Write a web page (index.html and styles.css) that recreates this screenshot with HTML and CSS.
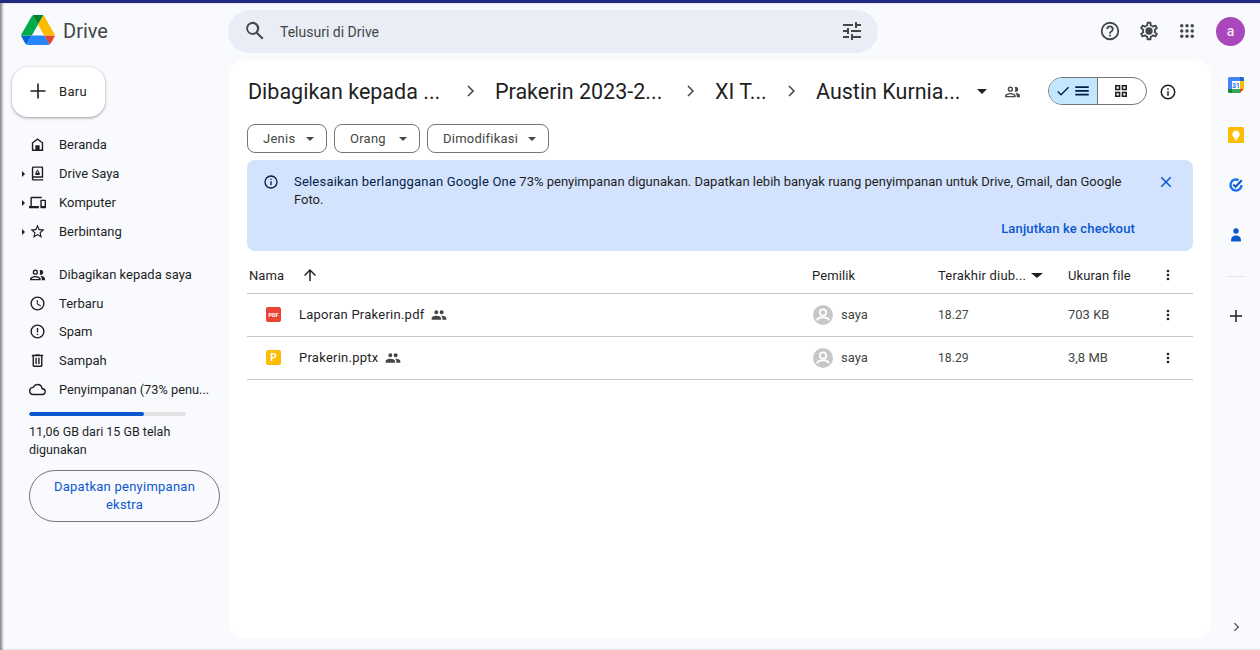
FILE: index.html
```html
<!DOCTYPE html>
<html lang="id">
<head>
<meta charset="utf-8">
<title>Drive</title>
<link rel="stylesheet" href="styles.css">
</head>
<body>
<div class="app">
  <aside class="sidebar">
    <div class="logo">
      <svg width="34" height="30" viewBox="0 0 87.3 78"><path d="M6.6 66.85l3.85 6.65c.8 1.4 1.95 2.5 3.3 3.3L27.5 53H0c0 1.55.4 3.1 1.2 4.5z" fill="#0066da"/><path d="M43.65 25L29.9 1.2c-1.35.8-2.5 1.9-3.3 3.3L1.2 48.5A9 9 0 0 0 0 53h27.5z" fill="#00ac47"/><path d="M73.55 76.8c1.35-.8 2.5-1.9 3.3-3.3l1.6-2.75 7.65-13.25c.8-1.4 1.2-2.95 1.2-4.5H59.8l5.85 11.5z" fill="#ea4335"/><path d="M43.65 25L57.4 1.2C56.05.4 54.5 0 52.9 0H34.4c-1.6 0-3.15.45-4.5 1.2z" fill="#00832d"/><path d="M59.8 53H27.5L13.75 76.8c1.35.8 2.9 1.2 4.5 1.2h50.8c1.6 0 3.15-.45 4.5-1.2z" fill="#2684fc"/><path d="M73.4 26.5L60.7 4.5c-.8-1.4-1.95-2.5-3.3-3.3L43.65 25 59.8 53h27.45c0-1.55-.4-3.1-1.2-4.5z" fill="#ffba00"/></svg>
      <span class="logo-text">Drive</span>
    </div>
    <button class="new-btn">
      <svg width="24" height="24" viewBox="0 0 24 24"><path d="M19.5 12.8h-6.700v6.700h-1.600v-6.700H4.500v-1.600h6.700V4.500h1.600v6.700h6.700z" fill="#1f1f1f"/></svg>
      <span>Baru</span>
    </button>
    <nav class="nav">
      <div class="nav-group">
        <a class="nav-item"><i class="caret-slot"></i><svg class="nav-ic" viewBox="0 0 24 24"><path d="M12 3L4 9v12h16V9zm6 16h-3v-6H9v6H6v-9l6-4.5 6 4.5z" fill="#1f1f1f"/></svg><span>Beranda</span></a>
        <a class="nav-item"><i class="caret-slot caret"></i><svg class="nav-ic" viewBox="0 0 24 24"><path d="M19 2H6a2 2 0 0 0-2 2v16a2 2 0 0 0 2 2h14v-2H6v-2h14V4a2 2 0 0 0-1-2zm-1 14H6V4h12z" fill="#1f1f1f"/><path d="M12 6l-3 5v3h6v-3zm0 2.6l1.4 2.4h-2.800z" fill="#1f1f1f"/></svg><span>Drive Saya</span></a>
        <a class="nav-item"><i class="caret-slot caret"></i><svg class="nav-ic wide" viewBox="0 0 24 24"><path d="M4 6h14V4H4a2 2 0 0 0-2 2v11H0v3h14v-3H4zm19 2h-6a1 1 0 0 0-1 1v10a1 1 0 0 0 1 1h6a1 1 0 0 0 1-1V9a1 1 0 0 0-1-1zm-1 9h-4v-7h4z" fill="#1f1f1f"/></svg><span>Komputer</span></a>
        <a class="nav-item"><i class="caret-slot caret"></i><svg class="nav-ic" viewBox="0 0 24 24"><path d="M22 9.24l-7.19-.62L12 2 9.19 8.63 2 9.24l5.46 4.73L5.82 21 12 17.27 18.18 21l-1.63-7.03zM12 15.4l-3.76 2.27 1-4.28-3.32-2.88 4.38-.38L12 6.1l1.71 4.04 4.38.38-3.32 2.88 1 4.28z" fill="#1f1f1f"/></svg><span>Berbintang</span></a>
      </div>
      <div class="nav-group">
        <a class="nav-item"><i class="caret-slot"></i><svg class="nav-ic" viewBox="0 0 24 24"><path d="M16.500 12.500a3.500 3.500 0 1 0-1.600-6.600 5.500 5.500 0 0 1 0 6.200c.5.3 1 .4 1.600.4zM9 12.500A3.750 3.750 0 1 0 9 5a3.750 3.750 0 0 0 0 7.500zm0-5.600a1.850 1.850 0 1 1 0 3.700 1.850 1.850 0 0 1 0-3.700zM9 14c-2.900 0-7.500 1.400-7.500 4v2h15v-2c0-2.600-4.600-4-7.500-4zm-5.500 4.200c.3-.8 3.100-2.300 5.500-2.300s5.200 1.500 5.500 2.300zM17.500 14c-.5 0-1 0-1.600.1 1.300.9 2.100 2.200 2.100 3.900v2h4.500v-2c0-2.600-2.700-4-5-4z" fill="#1f1f1f"/></svg><span>Dibagikan kepada saya</span></a>
        <a class="nav-item"><i class="caret-slot"></i><svg class="nav-ic" viewBox="0 0 24 24"><path d="M12 2a10 10 0 1 0 0 20 10 10 0 0 0 0-20zm0 18a8 8 0 1 1 0-16 8 8 0 0 1 0 16zm.5-13H11v6l5.200 3.200.8-1.300-4.500-2.700z" fill="#1f1f1f"/></svg><span>Terbaru</span></a>
        <a class="nav-item"><i class="caret-slot"></i><svg class="nav-ic" viewBox="0 0 24 24"><path d="M11 15h2v2h-2zm0-8h2v6h-2zm1-5a10 10 0 1 0 0 20 10 10 0 0 0 0-20zm0 18a8 8 0 1 1 0-16 8 8 0 0 1 0 16z" fill="#1f1f1f"/></svg><span>Spam</span></a>
        <a class="nav-item"><i class="caret-slot"></i><svg class="nav-ic" viewBox="0 0 24 24"><path d="M15 4V3H9v1H4v2h1v13a2 2 0 0 0 2 2h10a2 2 0 0 0 2-2V6h1V4zm2 15H7V6h10zM9 8h2v9H9zm4 0h2v9h-2z" fill="#1f1f1f"/></svg><span>Sampah</span></a>
        <a class="nav-item"><i class="caret-slot"></i><svg class="nav-ic" viewBox="0 0 24 24"><path d="M19.350 10.040A7.490 7.490 0 0 0 12 4a7.500 7.500 0 0 0-6.650 4.040A6 6 0 0 0 6 20h13a5 5 0 0 0 .350-9.960zM19 18H6a4 4 0 0 1-.4-7.980l1.070-.11.500-.95A5.460 5.460 0 0 1 12 6a5.500 5.500 0 0 1 5.390 4.420l.3 1.500 1.530.11A3 3 0 0 1 19 18z" fill="#1f1f1f"/></svg><span class="storage-label">Penyimpanan (73% penu...</span></a>
      </div>
    </nav>
    <div class="storage">
      <div class="bar"><div class="bar-fill" style="width:73%"></div></div>
      <p class="storage-text">11,06 GB dari 15 GB telah digunakan</p>
      <button class="storage-btn">Dapatkan penyimpanan ekstra</button>
    </div>
  </aside>

  <div class="center">
    <header class="topbar">
      <div class="search">
        <svg width="24" height="24" viewBox="0 0 24 24"><path d="M20.490 19l-5.730-5.730A6.470 6.470 0 0 0 16.250 9.500a6.500 6.500 0 1 0-2.980 5.260L19 20.490zM5 9.500a4.500 4.500 0 1 1 9 0 4.500 4.500 0 0 1-9 0z" fill="#444746"/></svg>
        <span class="search-text">Telusuri di Drive</span>
        <svg class="tune" width="24" height="24" viewBox="0 0 24 24"><path d="M3 17v2h6v-2zM3 5v2h10V5zm10 16v-2h8v-2h-8v-2h-2v6zM7 9v2H3v2h4v2h2V9zm14 4v-2H11v2zm-6-4h2V7h4V5h-4V3h-2z" fill="#444746"/></svg>
      </div>
      <div class="top-actions">
        <svg class="top-ic" viewBox="0 0 24 24"><path d="M11 18h2v-2h-2zm1-16a10 10 0 1 0 0 20 10 10 0 0 0 0-20zm0 18a8 8 0 1 1 0-16 8 8 0 0 1 0 16zm0-14a4 4 0 0 0-4 4h2a2 2 0 1 1 4 0c0 2-3 1.750-3 5h2c0-2.250 3-2.500 3-5a4 4 0 0 0-4-4z" fill="#444746"/></svg>
        <svg class="top-ic" viewBox="0 0 24 24"><path d="M19.430 12.980a7.800 7.800 0 0 0 0-1.960l2.110-1.650a.5.500 0 0 0 .12-.64l-2-3.460a.5.500 0 0 0-.61-.22l-2.490 1a7.300 7.300 0 0 0-1.690-.98l-.38-2.650A.49.490 0 0 0 14 2h-4a.49.490 0 0 0-.49.420l-.38 2.650c-.61.250-1.170.590-1.690.98l-2.490-1a.5.500 0 0 0-.61.220l-2 3.460a.49.490 0 0 0 .12.640l2.110 1.650a7.900 7.900 0 0 0 0 1.960l-2.110 1.650a.5.500 0 0 0-.12.640l2 3.460c.12.220.39.300.61.220l2.490-1c.52.400 1.080.730 1.690.98l.38 2.650c.03.240.24.420.49.420h4c.25 0 .46-.18.49-.42l.38-2.650c.61-.25 1.170-.59 1.690-.98l2.490 1c.23.090.49 0 .61-.22l2-3.460a.5.500 0 0 0-.12-.64zm-1.980-1.710c.04.310.05.520.05.730s-.02.430-.05.730l-.14 1.130.89.700 1.080.84-.7 1.210-1.270-.51-1.040-.42-.9.680c-.43.320-.84.560-1.250.73l-1.060.43-.16 1.130-.2 1.350h-1.400l-.19-1.350-.16-1.130-1.060-.43a5.700 5.700 0 0 1-1.230-.71l-.91-.7-1.060.43-1.270.51-.7-1.210 1.080-.84.890-.7-.14-1.130A8 8 0 0 1 6.500 12c0-.2.020-.43.05-.73l.14-1.130-.89-.7-1.080-.84.7-1.210 1.270.51 1.040.42.900-.68c.43-.32.840-.56 1.250-.73l1.060-.43.160-1.130.2-1.350h1.390l.19 1.350.16 1.130 1.060.43c.43.180.83.410 1.230.71l.91.700 1.060-.43 1.270-.51.700 1.210-1.070.85-.89.700zM12 8a4 4 0 1 0 0 8 4 4 0 0 0 0-8z" fill="#444746"/></svg>
        <svg class="top-ic" viewBox="0 0 24 24"><g fill="#444746"><circle cx="5" cy="5" r="2.300"/><circle cx="12" cy="5" r="2.300"/><circle cx="19" cy="5" r="2.300"/><circle cx="5" cy="12" r="2.300"/><circle cx="12" cy="12" r="2.300"/><circle cx="19" cy="12" r="2.300"/><circle cx="5" cy="19" r="2.300"/><circle cx="12" cy="19" r="2.300"/><circle cx="19" cy="19" r="2.300"/></g></svg>
        <div class="avatar">a</div>
      </div>
    </header>

    <main class="card">
      <div class="crumbs">
        <span class="crumb c1">Dibagikan kepada ...</span>
        <svg class="chev chev1" viewBox="0 0 24 24"><path d="M8.600 6l1.400-1.400L17.400 12 10 19.400 8.600 18l6-6z" fill="#444746"/></svg>
        <span class="crumb c2">Prakerin 2023-2...</span>
        <svg class="chev chev2" viewBox="0 0 24 24"><path d="M8.600 6l1.400-1.400L17.400 12 10 19.400 8.600 18l6-6z" fill="#444746"/></svg>
        <span class="crumb c3">XI T...</span>
        <svg class="chev chev3" viewBox="0 0 24 24"><path d="M8.600 6l1.400-1.400L17.400 12 10 19.400 8.600 18l6-6z" fill="#444746"/></svg>
        <span class="crumb c4">Austin Kurnia...</span>
        <i class="tri big"></i>
        <svg class="people-ic" viewBox="0 0 24 24"><path d="M16.500 12.500a3.500 3.500 0 1 0-1.600-6.600 5.500 5.500 0 0 1 0 6.200c.5.300 1 .4 1.600.4zM9 12.500A3.750 3.750 0 1 0 9 5a3.750 3.750 0 0 0 0 7.500zm0-5.600a1.850 1.850 0 1 1 0 3.700 1.850 1.850 0 0 1 0-3.700zM9 14c-2.900 0-7.500 1.400-7.500 4v2h15v-2c0-2.600-4.600-4-7.500-4zm-5.500 4.200c.3-.8 3.100-2.300 5.500-2.300s5.200 1.500 5.500 2.300zM17.500 14c-.5 0-1 0-1.600.1 1.300.9 2.100 2.200 2.100 3.900v2h4.500v-2c0-2.600-2.700-4-5-4z" fill="#444746"/></svg>
        <div class="toggle">
          <div class="tg tg-on">
            <svg width="16" height="16" viewBox="0 0 24 24"><path d="M9 16.200L4.800 12l-1.400 1.400L9 19 21 7l-1.400-1.400z" fill="#041e49"/></svg>
            <svg width="18" height="18" viewBox="0 0 24 24"><path d="M3 18h18v-2.200H3zm0-5h18v-2.200H3zm0-7.200V8h18V5.800z" fill="#041e49"/></svg>
          </div>
          <div class="tg tg-off">
            <svg width="16" height="16" viewBox="0 0 24 24"><path d="M3 3h8v8H3zm2.400 2.400v3.200h3.200V5.400zM13 3h8v8h-8zm2.400 2.400v3.200h3.200V5.400zM3 13h8v8H3zm2.400 2.400v3.200h3.200v-3.200zM13 13h8v8h-8zm2.400 2.400v3.200h3.200v-3.200z" fill="#1f1f1f"/></svg>
          </div>
        </div>
        <svg class="info-ic" viewBox="0 0 24 24"><path d="M11 7h2v2h-2zm0 4h2v6h-2zm1-9a10 10 0 1 0 0 20 10 10 0 0 0 0-20zm0 18a8 8 0 1 1 0-16 8 8 0 0 1 0 16z" fill="#1f1f1f"/></svg>
      </div>

      <div class="filters">
        <button class="chip chip-type">Jenis<i class="tri"></i></button>
        <button class="chip chip-people">Orang<i class="tri"></i></button>
        <button class="chip chip-date">Dimodifikasi<i class="tri"></i></button>
      </div>

      <section class="banner">
        <div class="banner-top">
          <svg class="banner-ic" viewBox="0 0 24 24"><path d="M11 7h2v2h-2zm0 4h2v6h-2zm1-9a10 10 0 1 0 0 20 10 10 0 0 0 0-20zm0 18a8 8 0 1 1 0-16 8 8 0 0 1 0 16z" fill="#041e49"/></svg>
          <div class="banner-text">
            <p class="banner-line"><span class="strong">Selesaikan berlangganan Google One</span> <span>73% penyimpanan digunakan. Dapatkan lebih banyak ruang penyimpanan untuk Drive, Gmail, dan Google</span></p>
            <p class="banner-line">Foto.</p>
          </div>
          <svg class="banner-x" viewBox="0 0 24 24"><path d="M19 6.400L17.600 5 12 10.600 6.400 5 5 6.400l5.600 5.600L5 17.600 6.400 19l5.600-5.600 5.600 5.600 1.400-1.400-5.600-5.600z" fill="#0b57d0"/></svg>
        </div>
        <div class="banner-action">Lanjutkan ke checkout</div>
      </section>

      <div class="row head">
        <div class="col-name"><span class="head-name">Nama</span><svg class="sort" viewBox="0 0 24 24"><path d="M4 12l1.400 1.400L11 7.800V20h2V7.800l5.600 5.600L20 12l-8-8z" fill="#1f1f1f"/></svg></div>
        <div class="col-owner">Pemilik</div>
        <div class="col-date head-date">Terakhir diub...<i class="tri big2"></i></div>
        <div class="col-size">Ukuran file</div>
        <div class="col-more"><svg class="more" viewBox="0 0 24 24"><path d="M12 8a2 2 0 1 0 0-4 2 2 0 0 0 0 4zm0 2a2 2 0 1 0 0 4 2 2 0 0 0 0-4zm0 6a2 2 0 1 0 0 4 2 2 0 0 0 0-4z" fill="#1f1f1f"/></svg></div>
      </div>

      <div class="row file">
        <div class="col-name file-name">
          <span class="ft ft-pdf">PDF</span>
          <span class="fname">Laporan Prakerin.pdf</span>
          <svg class="shared" viewBox="0 0 24 24"><path d="M16 11a3 3 0 1 0 0-6 3 3 0 0 0 0 6zm-8 0a3 3 0 1 0 0-6 3 3 0 0 0 0 6zm0 2c-2.330 0-7 1.170-7 3.500V19h14v-2.500C15 14.170 10.330 13 8 13zm8 0c-.29 0-.62.020-.97.050 1.160.840 1.970 1.970 1.970 3.450V19h6v-2.500c0-2.330-4.670-3.500-7-3.500z" fill="#444746"/></svg>
        </div>
        <div class="col-owner owner">
          <svg class="user" viewBox="0 0 24 24"><circle cx="12" cy="12" r="12" fill="#c7c7c7"/><circle cx="12" cy="9" r="3.800" fill="none" stroke="#fff" stroke-width="2"/><path d="M4.800 18.500c1-2.700 4.500-3.700 7.200-3.700s6.200 1 7.200 3.700" fill="none" stroke="#fff" stroke-width="2.400"/></svg>
          <span>saya</span>
        </div>
        <div class="col-date">18.27</div>
        <div class="col-size">703 KB</div>
        <div class="col-more"><svg class="more" viewBox="0 0 24 24"><path d="M12 8a2 2 0 1 0 0-4 2 2 0 0 0 0 4zm0 2a2 2 0 1 0 0 4 2 2 0 0 0 0-4zm0 6a2 2 0 1 0 0 4 2 2 0 0 0 0-4z" fill="#1f1f1f"/></svg></div>
      </div>

      <div class="row file">
        <div class="col-name file-name">
          <span class="ft ft-ppt">P</span>
          <span class="fname">Prakerin.pptx</span>
          <svg class="shared" viewBox="0 0 24 24"><path d="M16 11a3 3 0 1 0 0-6 3 3 0 0 0 0 6zm-8 0a3 3 0 1 0 0-6 3 3 0 0 0 0 6zm0 2c-2.330 0-7 1.170-7 3.500V19h14v-2.500C15 14.170 10.330 13 8 13zm8 0c-.29 0-.62.020-.97.050 1.160.840 1.970 1.970 1.970 3.450V19h6v-2.500c0-2.330-4.670-3.500-7-3.500z" fill="#444746"/></svg>
        </div>
        <div class="col-owner owner">
          <svg class="user" viewBox="0 0 24 24"><circle cx="12" cy="12" r="12" fill="#c7c7c7"/><circle cx="12" cy="9" r="3.800" fill="none" stroke="#fff" stroke-width="2"/><path d="M4.800 18.500c1-2.700 4.500-3.700 7.200-3.700s6.200 1 7.200 3.700" fill="none" stroke="#fff" stroke-width="2.400"/></svg>
          <span>saya</span>
        </div>
        <div class="col-date">18.29</div>
        <div class="col-size">3,8 MB</div>
        <div class="col-more"><svg class="more" viewBox="0 0 24 24"><path d="M12 8a2 2 0 1 0 0-4 2 2 0 0 0 0 4zm0 2a2 2 0 1 0 0 4 2 2 0 0 0 0-4zm0 6a2 2 0 1 0 0 4 2 2 0 0 0 0-4z" fill="#1f1f1f"/></svg></div>
      </div>
    </main>
  </div>

  <aside class="rail">
    <div class="rail-apps">
      <svg class="app-ic" viewBox="0 0 18 18"><rect x="1" y="1" width="16" height="16" rx="1.500" fill="#fff"/><path d="M1 13h4v4H2.500A1.500 1.500 0 0 1 1 15.500z" fill="#188038"/><path d="M5 13h8v4H5z" fill="#34a853"/><path d="M13 5h4v8h-4z" fill="#fbbc04"/><path d="M13 13h4l-4 4z" fill="#ea4335"/><path d="M1 5V2.500A1.500 1.500 0 0 1 2.500 1H13v4H5v8H1z" fill="#4285f4"/><path d="M13 1h2.500A1.500 1.500 0 0 1 17 2.500V5h-4z" fill="#1967d2"/><text x="9" y="11.500" class="cal-num">31</text></svg>
      <svg class="app-ic" viewBox="0 0 18 18"><rect x="1" y="1" width="16" height="16" rx="1.500" fill="#fbbc04"/><path d="M9 4.500a3.700 3.700 0 0 0-2 6.800V12.500h4v-1.200a3.700 3.700 0 0 0-2-6.800zM7.500 13.300h3v1h-3z" fill="#fff"/></svg>
      <svg class="app-ic" viewBox="0 0 18 18"><path d="M14.500 9a5.500 5.500 0 1 1-3-4.900" fill="none" stroke="#1a73e8" stroke-width="2.400"/><path d="M6.300 8.500l2.300 2.300 6.200-6.600" fill="none" stroke="#0b57d0" stroke-width="2"/></svg>
      <svg class="app-ic" viewBox="0 0 18 18"><circle cx="9" cy="5" r="2.700" fill="#0b57d0"/><path d="M4 14.500c0-3.400 2-5 5-5s5 1.600 5 5c0 .6-.4 1-1 1H5c-.6 0-1-.4-1-1z" fill="#0b57d0"/></svg>
    </div>
    <div class="rail-sep"></div>
    <svg class="rail-plus" viewBox="0 0 24 24"><path d="M20 13h-7v7h-2v-7H4v-2h7V4h2v7h7z" fill="#1f1f1f"/></svg>
    <svg class="rail-chev" viewBox="0 0 24 24"><path d="M8.600 6l1.400-1.400L17.400 12 10 19.400 8.600 18l6-6z" fill="#444746"/></svg>
  </aside>
</div>
</body>
</html>
```

FILE: styles.css
```css
* { box-sizing: border-box; }
html, body { margin: 0; height: 100%; overflow: hidden; }
body {
  font-family: Roboto, "Noto Sans", sans-serif;
  font-size: 13px;
  color: #1f1f1f;
  background: #f8fafd;
}
.app {
  height: 650px;
  display: grid;
  grid-template-columns: 229px 982px 49px;
  border-top: 3px solid #1f2a80;
  box-shadow: inset 3px 0 3px -1px rgba(50,50,50,.6);
}
.sidebar { padding-left: 12px; min-width: 0; }
.logo { display: flex; align-items: center; height: 57px; padding: 0 0 3px 9px; gap: 8px; }
.logo-text { font-size: 20px; color: #444746; padding-top: 1px; }
.new-btn {
  display: flex; align-items: center; width: 93px; height: 50px; margin-top: 7px;
  padding: 0 0 2px 14px; gap: 9px; border: 0; border-radius: 16px; background: #fff;
  font: 400 13px Roboto, sans-serif; letter-spacing: .3px; color: #1f1f1f;
  box-shadow: 0 1px 2px rgba(60,64,67,.3), 0 1px 3px 1px rgba(60,64,67,.15);
}
.nav { margin-top: 13px; }
.nav-group { margin-bottom: 14px; }
.nav-item { display: flex; align-items: center; height: 29px; color: #1f1f1f; }
.nav-group + .nav-group .nav-item { height: 28.750px; }
.caret-slot { width: 7px; flex: none; margin-left: 9px; margin-right: 2px; }
.caret::before {
  content: ""; display: block; width: 0; height: 0;
  border-left: 3px solid #1f1f1f; border-top: 3px solid transparent; border-bottom: 3px solid transparent;
  margin-left: 1px;
}
.nav-ic { width: 17px; height: 17px; flex: none; margin-right: 13px; margin-left: -1px; }
.nav-ic.wide { width: 19px; margin-left: -2px; margin-right: 12px; }
.storage-label { font-size: 12.800px; }
.storage { padding-left: 17px; margin-top: -6px; }
.bar { width: 157px; height: 4px; margin-top: 12px; background: #e3e3e3; border-radius: 2px; overflow: hidden; }
.bar-fill { height: 100%; background: #0b57d0; border-radius: 2px; }
.storage-text { margin: 7px 0 0; width: 175px; font-size: 12.500px; line-height: 18px; color: #1f1f1f; }
.storage-btn {
  display: block; width: 191px; height: 52px; margin-top: 11px; padding: 0 20px;
  border: 1px solid #747775; border-radius: 26px; background: transparent;
  font: 400 13px/18px Roboto, sans-serif; color: #0b57d0; letter-spacing: .25px;
}
.center { min-width: 0; display: flex; flex-direction: column; }
.topbar { display: flex; align-items: center; height: 57px; padding-bottom: 1px; }
.search {
  display: flex; align-items: center; width: 650px; height: 43px; margin-left: -1px;
  padding: 0 14px 0 15px; border-radius: 22px; background: #e9eef6;
}
.search-text { margin-left: 13px; flex: 1; font-size: 14px; color: #444746; padding-top: 2px; }
.top-actions { display: flex; align-items: center; margin-left: auto; margin-right: -34px; gap: 17px; position: relative; z-index: 1; }
.top-ic { width: 22px; height: 22px; }
.top-ic:nth-child(3) { width: 18px; height: 18px; margin: 0 2px 0 1px; }
.avatar {
  width: 29px; height: 29px; margin-left: 1px; border-radius: 50%; background: #ab47bc; color: #f6e6f8;
  display: flex; align-items: center; justify-content: center; font: 500 14px Roboto, sans-serif;
}
.card { height: 578px; background: #fff; border-radius: 16px; padding: 0 18px; }
.crumbs { display: flex; align-items: center; height: 63px; padding-bottom: 1px; }
.crumb { font-size: 21.500px; color: #1f1f1f; white-space: nowrap; }
.c1 { width: 195px; margin-left: 1px; }
.c2 { width: 170px; }
.c3 { width: 53px; }
.c4 { width: 152px; }
.chev { width: 18px; height: 18px; flex: none; }
.chev1 { margin: 0 16px 0 18px; }
.chev2 { margin: 0 16px; }
.chev3 { margin: 0 16px 0 14px; }
.tri { display: inline-block; width: 0; height: 0; border-left: 4px solid transparent; border-right: 4px solid transparent; border-top: 4px solid #444746; }
.tri.big { margin-left: 9px; border-top-color: #1f1f1f; border-left-width: 5px; border-right-width: 5px; border-top-width: 5px; }
.people-ic { width: 17px; height: 17px; margin-left: 17px; flex: none; }
.toggle { display: flex; width: 99px; height: 28px; margin-left: 27px; border: 1px solid #747775; border-radius: 14px; overflow: hidden; flex: none; }
.tg { height: 100%; display: flex; align-items: center; justify-content: center; }
.tg-on { width: 49px; background: #c2e7ff; border-right: 1px solid #747775; gap: 2px; }
.tg-off { flex: 1; padding-right: 2px; }
.info-ic { width: 18px; height: 18px; margin: 1px 0 0 12px; flex: none; }
.filters { display: flex; gap: 7px; margin-top: 1px; }
.chip {
  display: flex; align-items: center; justify-content: space-between; height: 29px; padding: 0 12px 0 15px;
  border: 1px solid #747775; border-radius: 8px; background: #fff;
  font: 400 13px Roboto, sans-serif; color: #444746; letter-spacing: .25px;
}
.chip-type { width: 80px; }
.chip-people { width: 86px; }
.chip-date { width: 122px; }
.banner { height: 91px; margin-top: 7px; padding: 13px 24px 0 16px; background: #d3e3fd; border-radius: 8px; display: flex; flex-direction: column; }
.banner-top { display: flex; align-items: flex-start; }
.banner-ic { width: 16px; height: 16px; flex: none; margin-top: 1px; }
.banner-text { margin-left: 15px; width: 842px; flex: none; color: #1f1f1f; }
.banner-line { margin: 0; line-height: 18px; white-space: nowrap; }
.strong { color: #041e49; letter-spacing: .2px; }
.banner-x { width: 18px; height: 18px; flex: none; margin-left: 21px; }
.banner-action { margin-top: 12px; text-align: right; font-weight: 500; color: #0b57d0; padding-right: 34px; letter-spacing: .15px; }
.row { display: flex; align-items: center; border-bottom: 1px solid #c7c7c7; }
.row.head { height: 43px; padding-top: 6px; letter-spacing: .1px; }
.head-date { letter-spacing: .2px; }
.row.file { height: 43px; padding-bottom: 1px; }
.col-name { width: 565px; display: flex; align-items: center; flex: none; padding-left: 2px; }
.col-owner { width: 126px; flex: none; }
.col-date { width: 130px; flex: none; display: flex; align-items: center; }
.col-size { flex: 1; }
.col-more { width: 50px; flex: none; display: flex; justify-content: center; }
.head-name { width: 52px; }
.sort { width: 18px; height: 18px; }
.big2 { margin-left: 5px; border-top-color: #1f1f1f; border-left-width: 6px; border-right-width: 6px; border-top-width: 5px; }
.more { width: 16px; height: 16px; }
.file .col-date { color: #444746; font-size: 12.200px; }
.file .col-size { color: #444746; }
.file-name { padding-left: 19px; }
.ft { display: inline-flex; align-items: center; justify-content: center; width: 15px; height: 15px; border-radius: 2px; flex: none; color: #fff; font-weight: 700; }
.ft-pdf { background: #ea4335; font-size: 5.500px; }
.ft-ppt { background: #fbbc04; font-size: 10px; }
.fname { margin-left: 18px; letter-spacing: .25px; color: #1f1f1f; }
.shared { width: 16px; height: 16px; margin-left: 6px; }
.owner { display: flex; align-items: center; gap: 8px; color: #444746; }
.user { width: 20px; height: 20px; margin-left: 1px; }
.rail { position: relative; display: flex; flex-direction: column; align-items: center; padding-left: 1px; }
.rail-apps { display: flex; flex-direction: column; align-items: center; gap: 32px; margin-top: 73px; }
.app-ic { width: 18px; height: 18px; }
.cal-num { font: 700 6.500px Roboto, sans-serif; fill: #1a73e8; text-anchor: middle; }
.rail-sep { width: 18px; height: 1px; background: #e3e3e3; margin-top: 32px; }
.rail-plus { width: 18px; height: 18px; margin-top: 30px; }
.rail-chev { position: absolute; width: 14px; height: 14px; left: 18px; bottom: 16px; }
```
